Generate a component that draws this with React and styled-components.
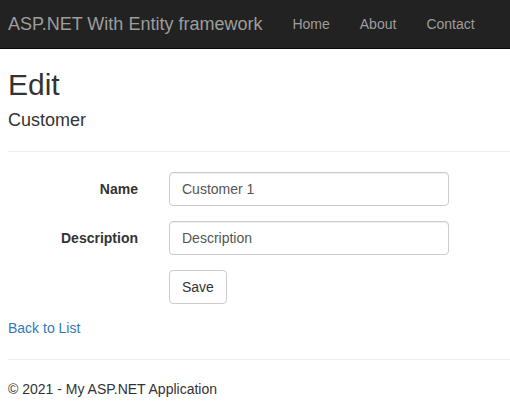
import React from "react";
import styled, { createGlobalStyle } from "styled-components";

const GlobalStyle = createGlobalStyle`
  body {
    margin: 0;
    font-family: "Liberation Sans", Arial, sans-serif;
    font-size: 14px;
    line-height: 1.42857;
    color: #333;
    background: #fff;
  }
`;

const Navbar = styled.nav`
  display: flex;
  align-items: center;
  height: 48px;
  background: #222;
  border-bottom: 1px solid #080808;
  padding-left: 8px;
`;

const Brand = styled.a`
  font-size: 18px;
  line-height: 46px;
  color: #9d9d9d;
  text-decoration: none;
  margin-right: 15px;
`;

const NavLink = styled.a`
  font-size: 14px;
  line-height: 46px;
  padding: 0 15px;
  color: #9d9d9d;
  text-decoration: none;
`;

const Main = styled.div`
  padding: 0 0 0 8px;
`;

const Title = styled.h2`
  font-size: 30px;
  font-weight: 500;
  line-height: 1.1;
  margin: 19px 0 10px;
`;

const SubTitle = styled.h4`
  font-size: 18px;
  font-weight: 500;
  line-height: 1.1;
  margin: 10px 0 0;
`;

const Rule = styled.hr`
  border: 0;
  border-top: 1px solid #eee;
  margin: 20px 0;
`;

const FormGroup = styled.div`
  display: grid;
  grid-template-columns: 130px 280px;
  column-gap: 31px;
  margin-bottom: 15px;
`;

const Label = styled.label`
  font-weight: bold;
  text-align: right;
  padding-top: 7px;
  line-height: 20px;
`;

const Input = styled.input`
  box-sizing: border-box;
  height: 34px;
  width: 100%;
  padding: 6px 12px;
  font-family: inherit;
  font-size: 14px;
  color: #555;
  border: 1px solid #ccc;
  border-radius: 4px;
  box-shadow: inset 0 1px 1px rgba(0, 0, 0, 0.075);
  outline: none;
  &::placeholder {
    color: #555;
  }
`;

const Button = styled.button`
  justify-self: start;
  height: 34px;
  padding: 6px 12px;
  font-family: inherit;
  font-size: 14px;
  line-height: 20px;
  color: #333;
  background: #fff;
  border: 1px solid #ccc;
  border-radius: 4px;
`;

const BackLink = styled.a`
  color: #337ab7;
  text-decoration: none;
`;

const Footer = styled.footer`
  p {
    margin: 0;
  }
`;

export default function App() {
  return (
    <>
      <GlobalStyle />
      <Navbar>
        <Brand href="#">ASP.NET With Entity framework</Brand>
        <NavLink href="#">Home</NavLink>
        <NavLink href="#">About</NavLink>
        <NavLink href="#">Contact</NavLink>
      </Navbar>
      <Main>
        <Title>Edit</Title>
        <SubTitle>Customer</SubTitle>
        <Rule />
        <form onSubmit={(e) => e.preventDefault()}>
          <FormGroup>
            <Label>Name</Label>
            <Input defaultValue="Customer 1" />
          </FormGroup>
          <FormGroup>
            <Label>Description</Label>
            <Input placeholder="Description" />
          </FormGroup>
          <FormGroup>
            <span />
            <Button type="submit">Save</Button>
          </FormGroup>
        </form>
        <div>
          <BackLink href="#">Back to List</BackLink>
        </div>
        <Rule />
        <Footer>
          <p>&copy; 2021 - My ASP.NET Application</p>
        </Footer>
      </Main>
    </>
  );
}
